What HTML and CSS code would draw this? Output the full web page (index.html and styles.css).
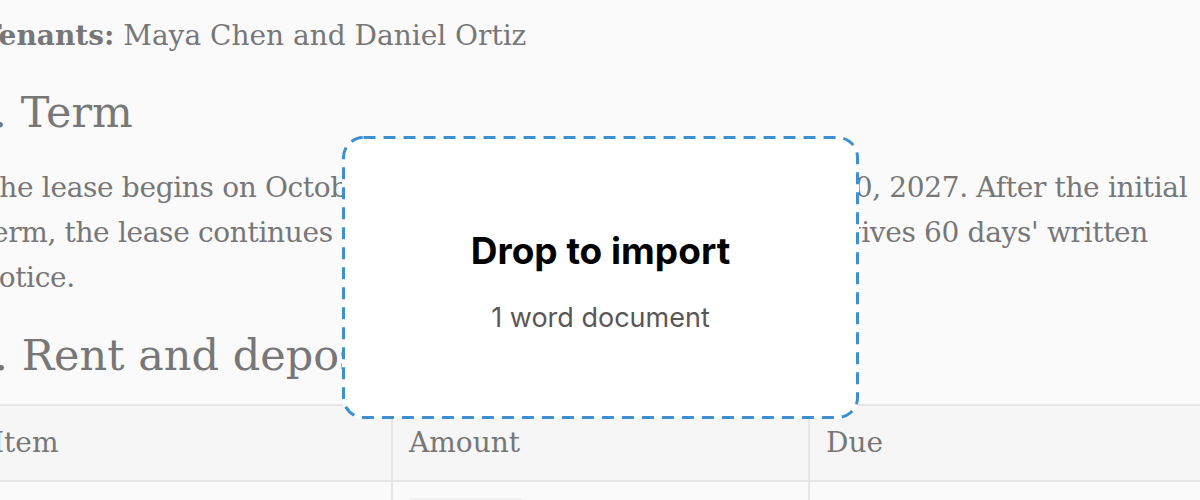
FILE: index.html
```html
<!DOCTYPE html>
<html lang="en">
<head>
<meta charset="utf-8">
<title>Lease agreement – import</title>
<link rel="stylesheet" href="styles.css">
</head>
<body>
<main class="doc">
  <p class="parties"><strong>Tenants:</strong> Maya Chen and Daniel Ortiz</p>
  <h2 class="section-title">2. Term</h2>
  <p class="para">The lease begins on October 1, 2026 and ends on September 30, 2027. After the initial term, the lease continues month-to-month unless either party gives 60 days' written notice.</p>
  <h2 class="section-title section-title--second">3. Rent and deposit</h2>
  <table class="rent-table">
    <thead>
      <tr><th>Item</th><th>Amount</th><th>Due</th></tr>
    </thead>
    <tbody>
      <tr><td>Monthly rent</td><td><span class="chip">$2,450</span></td><td>1st of each month</td></tr>
    </tbody>
  </table>
</main>
<div class="drop-overlay">
  <div class="drop-zone">
    <svg class="drop-border" width="517" height="283" viewBox="0 0 517 283" aria-hidden="true">
      <rect x="1.5" y="1.5" width="514" height="280" rx="20" ry="20" fill="none" stroke="#3d8fd0" stroke-width="3" stroke-dasharray="12 8"/>
    </svg>
    <div class="drop-title">Drop to import</div>
    <div class="drop-sub">1 word document</div>
  </div>
</div>
</body>
</html>
```

FILE: styles.css
```css
html, body {
  margin: 0;
  padding: 0;
  background: #fafafa;
  overflow: hidden;
  height: 500px;
}

.doc {
  margin-left: -19px;
  width: 1260px;
  font-family: "DejaVu Serif", "Liberation Serif", serif;
  color: #777;
  font-size: 28px;
  padding-top: 13px;
}

.parties {
  margin: 0;
  line-height: 45px;
}

.parties strong {
  font-weight: 700;
}

.section-title {
  margin: 26px 0 25px -15px;
  font-weight: 400;
  font-size: 43px;
  line-height: 56px;
}

.section-title--second {
  margin: 27px 0 0 -14px;
}

.para {
  margin: 0;
  width: 1240px;
  line-height: 45px;
  letter-spacing: -0.34px;
}

.rent-table {
  margin-top: 21px;
  margin-left: -4px;
  border-collapse: collapse;
  width: 1300px;
  table-layout: fixed;
}

.rent-table th,
.rent-table td {
  text-align: left;
  font-weight: 400;
  padding: 0 16px;
  border: 2px solid #e6e6e6;
  border-left: none;
  border-right: none;
  font-size: 28px;
  color: #777;
}

.rent-table th + th,
.rent-table td + td {
  border-left: 2px solid #e6e6e6;
}

.rent-table th:nth-child(1) { width: 382px; }
.rent-table th:nth-child(2) { width: 383px; }

.rent-table thead tr {
  background: #f6f6f6;
  height: 76px;
}

.rent-table th {
  vertical-align: middle;
  line-height: 40px;
}

.rent-table td {
  vertical-align: top;
  padding-top: 16px;
  height: 60px;
}

.chip {
  display: inline-block;
  background: #f1f1f1;
  border-radius: 4px;
  padding: 4px 8px;
  line-height: 36px;
}

.drop-overlay {
  position: fixed;
  inset: 0;
  display: flex;
  align-items: center;
  justify-content: center;
  padding-top: 55px;
  padding-left: 1px;
  box-sizing: border-box;
}

.drop-zone {
  position: relative;
  width: 517px;
  height: 283px;
  box-sizing: border-box;
  border-radius: 21px;
  background: #ffffff;
  display: flex;
  flex-direction: column;
  align-items: center;
  justify-content: center;
  font-family: Inter, "Noto Sans", sans-serif;
  padding-top: 6px;
}

.drop-border {
  position: absolute;
  left: 0;
  top: 0;
}

.drop-title {
  font-size: 37px;
  font-weight: 700;
  color: #000;
  line-height: 44px;
}

.drop-sub {
  margin-top: 30px;
  font-size: 27px;
  color: #5b5656;
  line-height: 30px;
}
```
